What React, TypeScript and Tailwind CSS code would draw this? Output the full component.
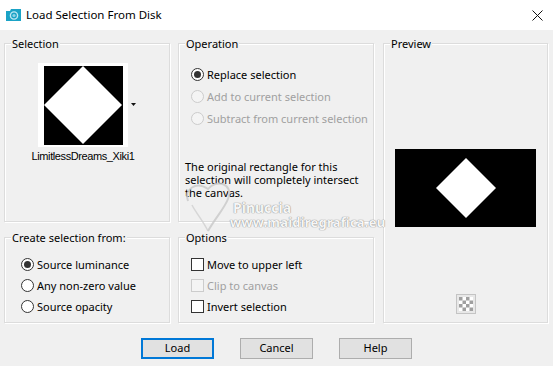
import React from "react";

const font = { fontFamily: '"Noto Sans", "Open Sans", sans-serif' };

function Group({
  label,
  className,
  children,
}: {
  label: string;
  className?: string;
  children?: React.ReactNode;
}) {
  return (
    <div
      className={
        "relative border border-[#dcdcdc] shadow-[inset_1px_1px_0_#ffffff,1px_1px_0_#ffffff] " +
        (className ?? "")
      }
    >
      <span className="absolute -top-[8px] left-[6px] bg-[#f0f0f0] px-[1px] text-[11px] leading-[15px] text-black">
        {label}
      </span>
      {children}
    </div>
  );
}

function Radio({
  label,
  checked,
  disabled,
  h = "h-[22px]",
}: {
  label: string;
  checked?: boolean;
  disabled?: boolean;
  h?: string;
}) {
  return (
    <div className={"flex items-center " + h}>
      <span
        className={
          "flex h-[13px] w-[13px] items-center justify-center rounded-full border " +
          (disabled ? "border-[#cccccc] bg-[#f4f4f4]" : "border-[#333333] bg-white")
        }
      >
        {checked && <span className="h-[7px] w-[7px] rounded-full bg-[#333333]" />}
      </span>
      <span
        className={
          "ml-[3px] text-[11px] leading-[15px] " + (disabled ? "text-[#a0a0a0]" : "text-black")
        }
      >
        {label}
      </span>
    </div>
  );
}

function Check({ label, disabled }: { label: string; disabled?: boolean }) {
  return (
    <div className="flex h-[21px] items-center">
      <span
        className={
          "h-[13px] w-[13px] border " +
          (disabled ? "border-[#cccccc] bg-[#f4f4f4]" : "border-[#333333] bg-white")
        }
      />
      <span
        className={
          "ml-[3px] text-[11px] leading-[15px] " + (disabled ? "text-[#a0a0a0]" : "text-black")
        }
      >
        {label}
      </span>
    </div>
  );
}

function Button({ label, primary }: { label: string; primary?: boolean }) {
  return (
    <div
      className={
        "flex h-[21px] w-[73px] items-center justify-center bg-[#e1e1e1] text-[11px] text-black " +
        (primary
          ? "border border-[#0078d7] shadow-[inset_0_0_0_1px_#0078d7]"
          : "border border-[#adadad]")
      }
    >
      {label}
    </div>
  );
}

function Diamond({ size }: { size: number }) {
  return (
    <svg width={size} height={size} viewBox="0 0 100 100">
      <polygon points="50,0 100,50 50,100 0,50" fill="#ffffff" />
    </svg>
  );
}

export default function App() {
  return (
    <div className="h-[366px] w-[553px] overflow-hidden bg-[#f0f0f0]" style={font}>
      {/* Title bar */}
      <div className="flex h-[30px] items-center bg-white">
        <svg className="ml-[6px]" width="15" height="13" viewBox="0 0 15 13">
          <path d="M0 2 L4 2 L5 0 L15 0 L15 12 L0 12 Z" fill="#1ba3c6" />
          <circle cx="8" cy="6.5" r="3.6" fill="none" stroke="#bfe8f3" strokeWidth="1.4" />
          <circle cx="8" cy="6.5" r="1.6" fill="#8fd3e6" />
        </svg>
        <span className="ml-[5px] text-[11.5px] text-black">Load Selection From Disk</span>
        <svg className="ml-auto mr-[10px]" width="11" height="11" viewBox="0 0 11 11">
          <path d="M0.5 0.5 L10.5 10.5 M10.5 0.5 L0.5 10.5" stroke="#111" strokeWidth="1" />
        </svg>
      </div>

      {/* Body */}
      <div className="relative pl-[4px] pt-[13px]">
        <div className="grid grid-cols-[166px_196px_166px] grid-rows-[179px_86px] gap-x-[8px] gap-y-[15px]">
          {/* Selection */}
          <Group label="Selection">
            <div className="flex pl-[33px] pt-[19px]">
              <div className="flex w-[90px] flex-col items-center">
                <div className="flex h-[84px] w-[90px] items-center justify-center bg-white">
                  <div className="flex h-[79px] w-[79px] items-center justify-center bg-black">
                    <Diamond size={78} />
                  </div>
                </div>
                <span
                  className="mt-[2px] whitespace-nowrap text-[11px] leading-[14px] text-black tracking-[-0.4px]"
                  style={{ fontFamily: '"Liberation Sans", Arial, sans-serif' }}
                >
                  LimitlessDreams_Xiki1
                </span>
              </div>
              <svg className="ml-[3px] mt-[40px]" width="5" height="3" viewBox="0 0 5 3">
                <polygon points="0,0 5,0 2.5,3" fill="#111" />
              </svg>
            </div>
          </Group>

          {/* Operation */}
          <Group label="Operation">
            <div className="flex flex-col pl-[12px] pt-[19px]">
              <Radio label="Replace selection" checked />
              <Radio label="Add to current selection" disabled />
              <Radio label="Subtract from current selection" disabled />
            </div>
            <p className="mt-[31px] pl-[6px] text-[11px] leading-[13px] text-black">
              The original rectangle for this
              <br />
              selection will completely intersect
              <br />
              the canvas.
            </p>
          </Group>

          {/* Preview */}
          <Group label="Preview" className="row-span-2 ml-[1px] w-[165px]">
            <div className="flex flex-col items-center pt-[105px]">
              <div className="flex h-[78px] w-[141px] items-center justify-center bg-black">
                <Diamond size={60} />
              </div>
              <div className="mt-[67px] flex h-[20px] w-[20px] items-center justify-center border border-[#c4c4c4] bg-[#e8e8e8]">
                <svg width="14" height="14" viewBox="0 0 4 4">
                  <rect width="4" height="4" fill="#ffffff" />
                  <rect x="0" y="0" width="1" height="1" fill="#a0a0a0" />
                  <rect x="2" y="0" width="1" height="1" fill="#a0a0a0" />
                  <rect x="1" y="1" width="1" height="1" fill="#a0a0a0" />
                  <rect x="3" y="1" width="1" height="1" fill="#a0a0a0" />
                  <rect x="0" y="2" width="1" height="1" fill="#a0a0a0" />
                  <rect x="2" y="2" width="1" height="1" fill="#a0a0a0" />
                  <rect x="1" y="3" width="1" height="1" fill="#a0a0a0" />
                  <rect x="3" y="3" width="1" height="1" fill="#a0a0a0" />
                </svg>
              </div>
            </div>
          </Group>

          {/* Create selection from */}
          <Group label="Create selection from:">
            <div className="flex flex-col pl-[16px] pt-[16px]">
              <Radio label="Source luminance" checked h="h-[21px]" />
              <Radio label="Any non-zero value" h="h-[21px]" />
              <Radio label="Source opacity" h="h-[21px]" />
            </div>
          </Group>

          {/* Options */}
          <Group label="Options">
            <div className="flex flex-col pl-[12px] pt-[16px]">
              <Check label="Move to upper left" />
              <Check label="Clip to canvas" disabled />
              <Check label="Invert selection" />
            </div>
          </Group>
        </div>

        {/* Buttons */}
        <div className="mt-[15px] flex justify-center gap-[26px] pr-[4px]">
          <Button label="Load" primary />
          <Button label="Cancel" />
          <Button label="Help" />
        </div>

        {/* Watermark overlay */}
        <div className="pointer-events-none absolute left-[182px] top-[131px] h-[80px] w-[215px]">
          <svg className="absolute left-0 top-0" width="80" height="80" viewBox="0 0 80 80">
            <path
              d="M6 40 C 2 28, 14 20, 26 28 C 34 18, 52 22, 46 38 C 42 48, 34 56, 26 70"
              fill="none"
              stroke="#c8c8c8"
              strokeWidth="2"
              opacity="0.8"
            />
            <path
              d="M10 44 C 14 52, 20 58, 26 70"
              fill="none"
              stroke="#cfcfcf"
              strokeWidth="1.5"
              opacity="0.8"
            />
          </svg>
          <span
            className="absolute left-[51px] top-[40px] whitespace-nowrap text-[14px] font-bold leading-[14px] text-[#f6f6f6]"
            style={{ textShadow: "0 0 1px #8a8a8a, 0 0 1px #8a8a8a" }}
          >
            Pinuccia
          </span>
          <span
            className="absolute left-[48px] top-[54px] whitespace-nowrap text-[13px] font-bold leading-[14px] tracking-[0.2px] text-[#f6f6f6]"
            style={{ textShadow: "0 0 1px #8a8a8a, 0 0 1px #8a8a8a" }}
          >
            www.maidiregrafica.eu
          </span>
        </div>
      </div>
    </div>
  );
}
